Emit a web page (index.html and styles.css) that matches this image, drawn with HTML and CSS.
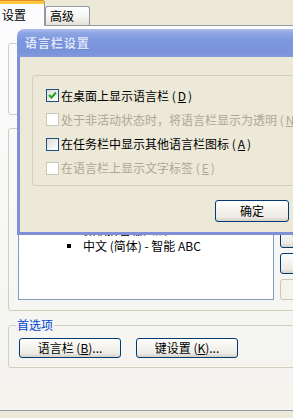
FILE: index.html
```html
<!DOCTYPE html>
<html lang="zh-CN">
<head>
    <meta charset="UTF-8">
    <title>文字服务和输入语言</title>
    <link rel="stylesheet" href="styles.css">
</head>
<body>
    <div class="window">
        <!-- Tabs -->
        <div class="tabs">
            <div class="tab active">设置</div>
            <div class="tab">高级</div>
        </div>

        <div class="page">
            <div class="group group-lang"></div>

            <!-- Installed services -->
            <div class="group group-services">
                <div class="services-row">
                    <div class="list">
                        <div class="list-line item">微软拼音输入法 2007</div>
                        <div class="list-line item">中文 (简体) - 智能 ABC</div>
                    </div>
                    <div class="side-buttons">
                        <button class="btn side">添加(<u>D</u>)...</button>
                        <button class="btn side">删除(<u>R</u>)</button>
                        <button class="btn side" disabled>属性(<u>P</u>)...</button>
                    </div>
                </div>
            </div>

            <!-- Preferences -->
            <fieldset class="prefs">
                <legend>首选项</legend>
                <div class="prefs-buttons">
                    <button class="btn pref">语言栏 (<u>B</u>)...</button>
                    <button class="btn pref">键设置 (<u>K</u>)...</button>
                </div>
            </fieldset>
        </div>
    </div>

    <!-- Language bar settings dialog -->
    <div class="dialog">
        <div class="dialog-title">语言栏设置</div>
        <div class="dialog-body">
            <div class="options">
                <label class="option">
                    <span class="check checked">
                        <svg width="11" height="11" viewBox="0 0 11 11"><path d="M2 5 L4.5 7.5 L9 2.5" fill="none" stroke="#21a121" stroke-width="2"/></svg>
                    </span>
                    在桌面上显示语言栏 (<u>D</u>)
                </label>
                <label class="option disabled">
                    <span class="check"></span>
                    处于非活动状态时，将语言栏显示为透明 (<u>N</u>)
                </label>
                <label class="option">
                    <span class="check"></span>
                    在任务栏中显示其他语言栏图标 (<u>A</u>)
                </label>
                <label class="option disabled">
                    <span class="check"></span>
                    在语言栏上显示文字标签 (<u>E</u>)
                </label>
            </div>
            <button class="btn ok">确定</button>
        </div>
    </div>
</body>
</html>
```

FILE: styles.css
```css
body {
    margin: 0;
    width: 293px;
    height: 418px;
    overflow: hidden;
    position: relative;
    background-color: #ece9d8;
    font-family: "Noto Sans CJK SC", sans-serif;
    font-size: 12px;
    line-height: 14px;
    color: #000;
}
u {
    text-decoration: underline;
}
.window {
    padding-top: 1px;
}
.tabs {
    display: flex;
    align-items: flex-end;
    height: 24px;
    margin-left: -2px;
}
.tab {
    width: 39px;
    height: 18px;
    padding-left: 4px;
    line-height: 18px;
    border: 1px solid #919b9c;
    border-bottom: none;
    border-radius: 3px 3px 0 0;
    background: linear-gradient(#ffffff, #f3f3ef 60%, #e3e1d8);
}
.tab.active {
    position: relative;
    z-index: 1;
    width: 42px;
    height: 22px;
    padding-left: 3px;
    line-height: 22px;
    margin-bottom: -1px;
    border-top: 3px solid #ffc83c;
    box-shadow: 0 -1px 0 #e68b2c;
    background: #fcfcfe;
}
.page {
    margin-left: -1px;
    width: 330px;
    height: 384px;
    border: 1px solid #919b9c;
    background: linear-gradient(#fcfcfe, #f4f3ee);
}
.group {
    margin-left: 8px;
    border: 1px solid #d0d0bf;
    border-radius: 3px;
}
.group-lang {
    margin-top: 17px;
    height: 70px;
}
.group-services {
    margin-top: 13px;
    height: 181px;
}
.services-row {
    display: flex;
    padding: 20px 0 0 9px;
}
.list {
    flex: none;
    width: 254px;
    height: 77px;
    padding-top: 72px;
    border: 1px solid #7f9db9;
    background-color: #fff;
    line-height: 16px;
    white-space: nowrap;
}
.list-line {
    padding-left: 20px;
}
.list-line.item {
    display: flex;
    align-items: center;
    padding-left: 48px;
}
.list-line.item::before {
    content: "";
    width: 4px;
    height: 4px;
    margin-right: 12px;
    background-color: #000;
}
.side-buttons {
    flex: none;
    display: flex;
    flex-direction: column;
    gap: 5px;
    margin: 78px 0 0 6px;
}
.btn {
    font-family: inherit;
    font-size: 12px;
    line-height: 14px;
    color: #000;
    padding: 0;
    border: 1px solid #003c74;
    border-radius: 3px;
    background: linear-gradient(#ffffff, #f5f4ef 40%, #ecebe6 80%, #d6d0c5);
    white-space: nowrap;
}
.btn:disabled {
    color: #aca899;
    border-color: #c9c7ba;
    background: #f5f4ea;
}
.btn.side {
    width: 75px;
    height: 21px;
}
.prefs {
    margin: 7px 0 0 8px;
    padding: 0 0 9px 10px;
    width: 320px;
    border: 1px solid #d0d0bf;
    border-radius: 3px;
}
.prefs legend {
    margin-left: -3px;
    padding: 0 1px;
    color: #0046d5;
}
.prefs-buttons {
    display: flex;
    gap: 15px;
    margin-top: 6px;
}
.btn.pref {
    width: 102px;
    height: 20px;
}

/* dialog on top */
.dialog {
    position: absolute;
    left: 17px;
    top: 29px;
    width: 296px;
}
.dialog-title {
    height: 28px;
    padding-left: 8px;
    line-height: 28px;
    border-radius: 7px 7px 0 0;
    background: linear-gradient(#aebdec, #8ea5e4 4px, #7d98df 40%, #7a94dc 85%, #8598da);
    color: #dce6fa;
    font-weight: bold;
    letter-spacing: 1px;
    text-shadow: 1px 1px 0 #6f86cf;
}
.dialog-body {
    height: 150px;
    padding: 18px 0 7px 12px;
    border: 3px solid #7f8fd8;
    border-top: none;
    background-color: #ece9d8;
}
.options {
    display: flex;
    flex-direction: column;
    gap: 11.34px;
    height: 96px;
    padding: 13px 0 0 13px;
    border: 1px solid #d0d0bf;
    border-radius: 3px;
    white-space: nowrap;
}
.option {
    display: flex;
    align-items: center;
    gap: 2px;
    height: 13px;
}
.option.disabled {
    color: #aca899;
}
.check {
    flex: none;
    display: flex;
    align-items: center;
    justify-content: center;
    width: 11px;
    height: 11px;
    border: 1px solid #1c5180;
    background: linear-gradient(135deg, #dcdcd7, #ffffff);
}
.option.disabled .check {
    border-color: #cac8bb;
    background: #fff;
}
.btn.ok {
    display: block;
    width: 74px;
    height: 22px;
    margin: 14px 0 0 183px;
}
```
